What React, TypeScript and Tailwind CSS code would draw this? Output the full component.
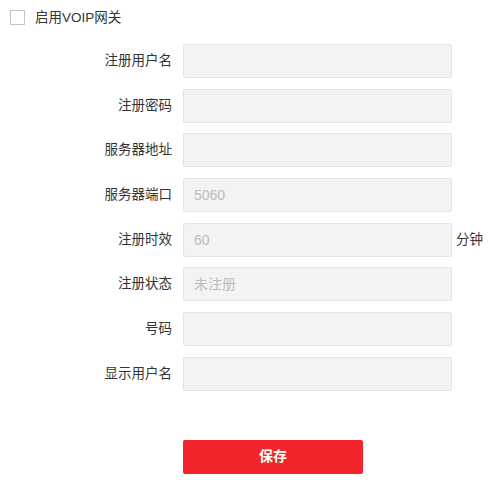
import React from "react";

interface FieldProps {
  label: string;
  placeholder?: string;
  suffix?: string;
}

const Field: React.FC<FieldProps> = ({ label, placeholder, suffix }) => {
  return (
    <div className="flex h-[34px] items-center">
      <label className="w-[172px] text-right text-[13.5px] text-[#333]">{label}</label>
      <input
        className="ml-[11px] h-[34px] w-[269px] rounded-[2px] border border-[#e4e4e4] bg-[#f3f3f3] px-[10px] text-[14px] text-[#333] outline-none placeholder:text-[#bdbdbd]"
        placeholder={placeholder}
      />
      {suffix && <span className="ml-[4px] text-[13.5px] text-[#333]">{suffix}</span>}
    </div>
  );
};

export default function App() {
  return (
    <div
      className="h-[493px] w-[501px] bg-white"
      style={{ fontFamily: '"Liberation Sans", "Noto Sans CJK SC", sans-serif' }}
    >
      <div className="flex h-[15px] items-center pl-[10px] mt-[10px]">
        <span className="h-[15px] w-[15px] border border-[#c4c4c4] bg-white" />
        <span className="ml-[10px] text-[13.5px] leading-[15px] text-[#333]">启用VOIP网关</span>
      </div>
      <div className="mt-[19px] flex flex-col gap-[10.7px]">
        <Field label="注册用户名" />
        <Field label="注册密码" />
        <Field label="服务器地址" />
        <Field label="服务器端口" placeholder="5060" />
        <Field label="注册时效" placeholder="60" suffix="分钟" />
        <Field label="注册状态" placeholder="未注册" />
        <Field label="号码" />
        <Field label="显示用户名" />
      </div>
      <div className="mt-[49px] pl-[183px]">
        <button className="h-[34px] w-[180px] rounded-[2px] bg-[#f4242d] text-[14px] font-bold text-white">
          保存
        </button>
      </div>
    </div>
  );
}
